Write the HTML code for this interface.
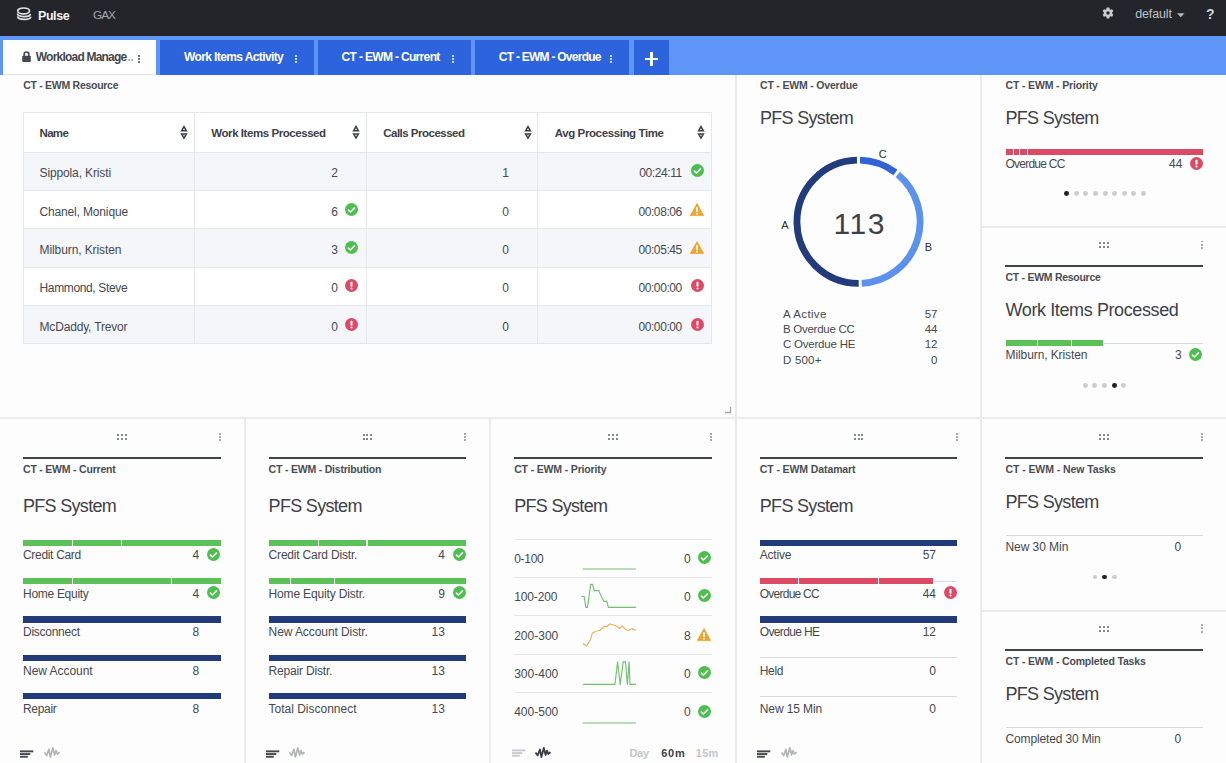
<!DOCTYPE html><html><head><meta charset="utf-8"><style>
html,body{margin:0;padding:0;width:1226px;height:763px;overflow:hidden;background:#e9ebee;font-family:"Liberation Sans",sans-serif;}
.t{position:absolute;white-space:pre;}.r{position:absolute;}.s{position:absolute;overflow:visible;}
</style></head><body>
<div class="r" style="left:0.00px;top:0.00px;width:1226.00px;height:36.00px;background:#23252b;"></div>
<svg class="s" style="left:16.00px;top:7.40px;" width="16" height="14" viewBox="0 0 16 14"><g fill="none" stroke="#e2e2e4" stroke-width="1.7"><ellipse cx="7.6" cy="3.9" rx="5.9" ry="2.9"/><path d="M1.5 6.6 C1.5 10.6 14.2 10.6 14.4 6.9"/><path d="M1.6 9.4 C1.8 13.4 14.6 13.3 14.8 9.8"/></g></svg>
<div class="t" style="left:38.00px;top:9.62px;font-size:12.5px;line-height:12.5px;font-weight:700;color:#f2f2f2;letter-spacing:-0.438px;">Pulse</div>
<div class="t" style="left:93.00px;top:10.21px;font-size:11.8px;line-height:11.8px;font-weight:400;color:#a3a6ab;letter-spacing:-0.960px;">GAX</div>
<svg class="s" style="left:1101.90px;top:7.40px;" width="12" height="12" viewBox="0 0 12 12"><path d="M4.33 2.25 L4.74 0.54 L7.26 0.54 L7.67 2.25 L8.41 2.68 L10.10 2.18 L11.36 4.36 L10.08 5.57 L10.08 6.43 L11.36 7.64 L10.10 9.82 L8.41 9.32 L7.67 9.75 L7.26 11.46 L4.74 11.46 L4.33 9.75 L3.59 9.32 L1.90 9.82 L0.64 7.64 L1.92 6.43 L1.92 5.57 L0.64 4.36 L1.90 2.18 L3.59 2.68Z" fill="#c9ccd1"/><circle cx="6" cy="6" r="1.7" fill="#23252b"/></svg>
<div class="t" style="left:1135.20px;top:8.02px;font-size:12.5px;line-height:12.5px;font-weight:400;color:#bfc2c7;letter-spacing:-0.122px;">default</div>
<svg class="s" style="left:1176.50px;top:12.80px;" width="8" height="5" viewBox="0 0 8 5"><path d="M0 0.3 L7.5 0.3 L3.75 4.2 Z" fill="#b5b8bd"/></svg>
<div class="t" style="left:1205.90px;top:6.65px;font-size:14px;line-height:14px;font-weight:700;color:#d2d4d7;letter-spacing:0.000px;">?</div>
<div class="r" style="left:0.00px;top:36.00px;width:1226.00px;height:38.60px;background:#5e95f7;"></div>
<div class="r" style="left:3.00px;top:40.00px;width:153.00px;height:34.80px;background:#ffffff;"></div>
<div class="r" style="left:3.00px;top:73.80px;width:153.00px;height:1.00px;background:#e4e5e8;"></div>
<div class="r" style="left:160.00px;top:40.00px;width:154.00px;height:34.60px;background:#2d64de;"></div>
<div class="r" style="left:318.00px;top:40.00px;width:153.00px;height:34.60px;background:#2d64de;"></div>
<div class="r" style="left:475.00px;top:40.00px;width:153.50px;height:34.60px;background:#2d64de;"></div>
<div class="r" style="left:634.00px;top:40.00px;width:35.00px;height:34.60px;background:#2d64de;"></div>
<svg class="s" style="left:22.00px;top:51.00px;" width="9" height="11" viewBox="0 0 9 11"><path d="M2.2 5 V3.3 A2.3 2.3 0 0 1 6.8 3.3 V5" stroke="#44474d" stroke-width="1.7" fill="none"/><rect x="0.2" y="4.8" width="8.6" height="6.1" rx="0.8" fill="#44474d"/></svg>
<div class="t" style="left:35.80px;top:51.44px;font-size:12px;line-height:12px;font-weight:700;color:#44474d;letter-spacing:-0.790px;">Workload Manage</div>
<div class="t" style="left:127.50px;top:51.44px;font-size:12px;line-height:12px;font-weight:700;color:#a9abaf;letter-spacing:-0.368px;">..</div>
<div class="r" style="left:137.90px;top:54.60px;width:2.00px;height:2.00px;background:#44474d;border-radius:1px"></div>
<div class="r" style="left:137.90px;top:57.80px;width:2.00px;height:2.00px;background:#44474d;border-radius:1px"></div>
<div class="r" style="left:137.90px;top:61.00px;width:2.00px;height:2.00px;background:#44474d;border-radius:1px"></div>
<div class="t" style="left:184.00px;top:51.44px;font-size:12px;line-height:12px;font-weight:700;color:#ffffff;letter-spacing:-0.606px;">Work Items Activity</div>
<div class="r" style="left:295.00px;top:54.60px;width:2.00px;height:2.00px;background:#ffffff;border-radius:1px"></div>
<div class="r" style="left:295.00px;top:57.80px;width:2.00px;height:2.00px;background:#ffffff;border-radius:1px"></div>
<div class="r" style="left:295.00px;top:61.00px;width:2.00px;height:2.00px;background:#ffffff;border-radius:1px"></div>
<div class="t" style="left:341.60px;top:51.44px;font-size:12px;line-height:12px;font-weight:700;color:#ffffff;letter-spacing:-0.664px;">CT - EWM - Current</div>
<div class="r" style="left:452.00px;top:54.60px;width:2.00px;height:2.00px;background:#ffffff;border-radius:1px"></div>
<div class="r" style="left:452.00px;top:57.80px;width:2.00px;height:2.00px;background:#ffffff;border-radius:1px"></div>
<div class="r" style="left:452.00px;top:61.00px;width:2.00px;height:2.00px;background:#ffffff;border-radius:1px"></div>
<div class="t" style="left:498.80px;top:51.44px;font-size:12px;line-height:12px;font-weight:700;color:#ffffff;letter-spacing:-0.743px;">CT - EWM - Overdue</div>
<div class="r" style="left:609.50px;top:54.60px;width:2.00px;height:2.00px;background:#ffffff;border-radius:1px"></div>
<div class="r" style="left:609.50px;top:57.80px;width:2.00px;height:2.00px;background:#ffffff;border-radius:1px"></div>
<div class="r" style="left:609.50px;top:61.00px;width:2.00px;height:2.00px;background:#ffffff;border-radius:1px"></div>
<div class="r" style="left:644.60px;top:57.90px;width:13.80px;height:2.30px;background:#ffffff;"></div>
<div class="r" style="left:650.40px;top:52.10px;width:2.30px;height:13.80px;background:#ffffff;"></div>
<div class="r" style="left:0.00px;top:75.00px;width:734.80px;height:342.30px;background:#fdfdfe;"></div>
<div class="r" style="left:736.80px;top:75.00px;width:243.60px;height:342.30px;background:#fdfdfe;"></div>
<div class="r" style="left:982.40px;top:75.00px;width:243.60px;height:150.60px;background:#fdfdfe;"></div>
<div class="r" style="left:982.40px;top:227.60px;width:243.60px;height:189.70px;background:#fdfdfe;"></div>
<div class="r" style="left:0.00px;top:419.30px;width:243.60px;height:343.70px;background:#fdfdfe;"></div>
<div class="r" style="left:245.60px;top:419.30px;width:243.60px;height:343.70px;background:#fdfdfe;"></div>
<div class="r" style="left:491.20px;top:419.30px;width:243.60px;height:343.70px;background:#fdfdfe;"></div>
<div class="r" style="left:736.80px;top:419.30px;width:243.60px;height:343.70px;background:#fdfdfe;"></div>
<div class="r" style="left:982.40px;top:419.30px;width:243.60px;height:190.30px;background:#fdfdfe;"></div>
<div class="r" style="left:982.40px;top:611.60px;width:243.60px;height:151.40px;background:#fdfdfe;"></div>
<div class="t" style="left:23.20px;top:80.31px;font-size:10.5px;line-height:10.5px;font-weight:700;color:#4a4d53;letter-spacing:-0.279px;">CT - EWM Resource</div>
<div class="r" style="left:23.00px;top:112.20px;width:688.50px;height:231.80px;background:#ffffff;box-sizing:border-box;border:1px solid #e4e7eb"></div>
<div class="r" style="left:24.00px;top:152.00px;width:686.50px;height:38.40px;background:#f4f6f9;"></div>
<div class="r" style="left:23.00px;top:151.50px;width:688.50px;height:1.00px;background:#e4e7eb;"></div>
<div class="r" style="left:24.00px;top:190.40px;width:686.50px;height:38.40px;background:#ffffff;"></div>
<div class="r" style="left:23.00px;top:189.90px;width:688.50px;height:1.00px;background:#e4e7eb;"></div>
<div class="r" style="left:24.00px;top:228.80px;width:686.50px;height:38.40px;background:#f4f6f9;"></div>
<div class="r" style="left:23.00px;top:228.30px;width:688.50px;height:1.00px;background:#e4e7eb;"></div>
<div class="r" style="left:24.00px;top:267.20px;width:686.50px;height:38.40px;background:#ffffff;"></div>
<div class="r" style="left:23.00px;top:266.70px;width:688.50px;height:1.00px;background:#e4e7eb;"></div>
<div class="r" style="left:24.00px;top:305.60px;width:686.50px;height:38.40px;background:#f4f6f9;"></div>
<div class="r" style="left:23.00px;top:305.10px;width:688.50px;height:1.00px;background:#e4e7eb;"></div>
<div class="r" style="left:193.90px;top:112.20px;width:1.00px;height:231.80px;background:#e4e7eb;"></div>
<div class="r" style="left:365.70px;top:112.20px;width:1.00px;height:231.80px;background:#e4e7eb;"></div>
<div class="r" style="left:537.10px;top:112.20px;width:1.00px;height:231.80px;background:#e4e7eb;"></div>
<div class="r" style="left:23.00px;top:343.00px;width:688.50px;height:1.00px;background:#e4e7eb;"></div>
<div class="r" style="left:710.50px;top:112.20px;width:1.00px;height:231.80px;background:#e4e7eb;"></div>
<div class="t" style="left:39.50px;top:128.07px;font-size:11.5px;line-height:11.5px;font-weight:700;color:#3e4147;letter-spacing:-0.674px;">Name</div>
<div class="t" style="left:211.30px;top:128.07px;font-size:11.5px;line-height:11.5px;font-weight:700;color:#3e4147;letter-spacing:-0.439px;">Work Items Processed</div>
<div class="t" style="left:383.20px;top:128.07px;font-size:11.5px;line-height:11.5px;font-weight:700;color:#3e4147;letter-spacing:-0.504px;">Calls Processed</div>
<div class="t" style="left:554.70px;top:128.07px;font-size:11.5px;line-height:11.5px;font-weight:700;color:#3e4147;letter-spacing:-0.390px;">Avg Processing Time</div>
<svg class="s" style="left:180.00px;top:124.80px;" width="8" height="15" viewBox="0 0 8 15"><path d="M4 0.1 L7.7 6.6 L0.3 6.6 Z M4 3.3 L5.0 5.1 L3.0 5.1 Z" fill="#3e4147" fill-rule="evenodd"/><path d="M4 14.5 L7.7 8.2 L0.3 8.2 Z M4 11.4 L5.0 9.7 L3.0 9.7 Z" fill="#3e4147" fill-rule="evenodd"/></svg>
<svg class="s" style="left:352.30px;top:124.80px;" width="8" height="15" viewBox="0 0 8 15"><path d="M4 0.1 L7.7 6.6 L0.3 6.6 Z M4 3.3 L5.0 5.1 L3.0 5.1 Z" fill="#3e4147" fill-rule="evenodd"/><path d="M4 14.5 L7.7 8.2 L0.3 8.2 Z M4 11.4 L5.0 9.7 L3.0 9.7 Z" fill="#3e4147" fill-rule="evenodd"/></svg>
<svg class="s" style="left:523.60px;top:124.80px;" width="8" height="15" viewBox="0 0 8 15"><path d="M4 0.1 L7.7 6.6 L0.3 6.6 Z M4 3.3 L5.0 5.1 L3.0 5.1 Z" fill="#3e4147" fill-rule="evenodd"/><path d="M4 14.5 L7.7 8.2 L0.3 8.2 Z M4 11.4 L5.0 9.7 L3.0 9.7 Z" fill="#3e4147" fill-rule="evenodd"/></svg>
<svg class="s" style="left:697.30px;top:124.80px;" width="8" height="15" viewBox="0 0 8 15"><path d="M4 0.1 L7.7 6.6 L0.3 6.6 Z M4 3.3 L5.0 5.1 L3.0 5.1 Z" fill="#3e4147" fill-rule="evenodd"/><path d="M4 14.5 L7.7 8.2 L0.3 8.2 Z M4 11.4 L5.0 9.7 L3.0 9.7 Z" fill="#3e4147" fill-rule="evenodd"/></svg>
<div class="t" style="left:39.50px;top:167.14px;font-size:12px;line-height:12px;font-weight:400;color:#46494f;letter-spacing:-0.126px;">Sippola, Kristi</div>
<div class="t" style="left:-262.00px;width:600px;text-align:right;top:167.14px;font-size:12px;line-height:12px;font-weight:400;color:#46494f;letter-spacing:0.000px;">2</div>
<div class="t" style="left:-91.20px;width:600px;text-align:right;top:167.14px;font-size:12px;line-height:12px;font-weight:400;color:#46494f;letter-spacing:0.000px;">1</div>
<div class="t" style="left:81.91px;width:600px;text-align:right;top:167.14px;font-size:12px;line-height:12px;font-weight:400;color:#46494f;letter-spacing:-0.393px;">00:24:11</div>
<svg class="s" style="left:690.50px;top:164.20px;" width="13" height="13" viewBox="0 0 13 13"><circle cx="6.5" cy="6.5" r="6.5" fill="#4cbf4e"/><path d="M3.40 7.10 L5.40 9.00 L9.50 4.90" stroke="#fff" stroke-width="1.5" fill="none" stroke-linecap="round" stroke-linejoin="round"/></svg>
<div class="t" style="left:39.50px;top:205.54px;font-size:12px;line-height:12px;font-weight:400;color:#46494f;letter-spacing:-0.152px;">Chanel, Monique</div>
<div class="t" style="left:-262.00px;width:600px;text-align:right;top:205.54px;font-size:12px;line-height:12px;font-weight:400;color:#46494f;letter-spacing:0.000px;">6</div>
<svg class="s" style="left:345.10px;top:202.60px;" width="13" height="13" viewBox="0 0 13 13"><circle cx="6.5" cy="6.5" r="6.5" fill="#4cbf4e"/><path d="M3.40 7.10 L5.40 9.00 L9.50 4.90" stroke="#fff" stroke-width="1.5" fill="none" stroke-linecap="round" stroke-linejoin="round"/></svg>
<div class="t" style="left:-91.20px;width:600px;text-align:right;top:205.54px;font-size:12px;line-height:12px;font-weight:400;color:#46494f;letter-spacing:0.000px;">0</div>
<div class="t" style="left:81.90px;width:600px;text-align:right;top:205.54px;font-size:12px;line-height:12px;font-weight:400;color:#46494f;letter-spacing:-0.400px;">00:08:06</div>
<svg class="s" style="left:690.00px;top:203.00px;" width="14" height="13" viewBox="0 0 14 13"><path d="M7.0 0.6 L13.7 12.6 L0.3 12.6 Z" fill="#f0a52e" stroke="#f0a52e" stroke-width="0.8" stroke-linejoin="round"/><rect x="6.10" y="4.3" width="1.8" height="4.6" fill="#fff"/><rect x="6.10" y="9.8" width="1.8" height="1.7" fill="#fff"/></svg>
<div class="t" style="left:39.50px;top:243.94px;font-size:12px;line-height:12px;font-weight:400;color:#46494f;letter-spacing:-0.091px;">Milburn, Kristen</div>
<div class="t" style="left:-262.00px;width:600px;text-align:right;top:243.94px;font-size:12px;line-height:12px;font-weight:400;color:#46494f;letter-spacing:0.000px;">3</div>
<svg class="s" style="left:345.10px;top:241.00px;" width="13" height="13" viewBox="0 0 13 13"><circle cx="6.5" cy="6.5" r="6.5" fill="#4cbf4e"/><path d="M3.40 7.10 L5.40 9.00 L9.50 4.90" stroke="#fff" stroke-width="1.5" fill="none" stroke-linecap="round" stroke-linejoin="round"/></svg>
<div class="t" style="left:-91.20px;width:600px;text-align:right;top:243.94px;font-size:12px;line-height:12px;font-weight:400;color:#46494f;letter-spacing:0.000px;">0</div>
<div class="t" style="left:81.90px;width:600px;text-align:right;top:243.94px;font-size:12px;line-height:12px;font-weight:400;color:#46494f;letter-spacing:-0.400px;">00:05:45</div>
<svg class="s" style="left:690.00px;top:241.40px;" width="14" height="13" viewBox="0 0 14 13"><path d="M7.0 0.6 L13.7 12.6 L0.3 12.6 Z" fill="#f0a52e" stroke="#f0a52e" stroke-width="0.8" stroke-linejoin="round"/><rect x="6.10" y="4.3" width="1.8" height="4.6" fill="#fff"/><rect x="6.10" y="9.8" width="1.8" height="1.7" fill="#fff"/></svg>
<div class="t" style="left:39.50px;top:282.34px;font-size:12px;line-height:12px;font-weight:400;color:#46494f;letter-spacing:-0.355px;">Hammond, Steve</div>
<div class="t" style="left:-262.00px;width:600px;text-align:right;top:282.34px;font-size:12px;line-height:12px;font-weight:400;color:#46494f;letter-spacing:0.000px;">0</div>
<svg class="s" style="left:345.10px;top:279.40px;" width="13" height="13" viewBox="0 0 13 13"><circle cx="6.5" cy="6.5" r="6.5" fill="#dc4a66"/><rect x="5.50" y="2.70" width="2" height="5" rx="0.8" fill="#fff"/><circle cx="6.5" cy="9.50" r="1.05" fill="#fff"/></svg>
<div class="t" style="left:-91.20px;width:600px;text-align:right;top:282.34px;font-size:12px;line-height:12px;font-weight:400;color:#46494f;letter-spacing:0.000px;">0</div>
<div class="t" style="left:81.90px;width:600px;text-align:right;top:282.34px;font-size:12px;line-height:12px;font-weight:400;color:#46494f;letter-spacing:-0.400px;">00:00:00</div>
<svg class="s" style="left:690.50px;top:279.40px;" width="13" height="13" viewBox="0 0 13 13"><circle cx="6.5" cy="6.5" r="6.5" fill="#dc4a66"/><rect x="5.50" y="2.70" width="2" height="5" rx="0.8" fill="#fff"/><circle cx="6.5" cy="9.50" r="1.05" fill="#fff"/></svg>
<div class="t" style="left:39.50px;top:320.74px;font-size:12px;line-height:12px;font-weight:400;color:#46494f;letter-spacing:-0.169px;">McDaddy, Trevor</div>
<div class="t" style="left:-262.00px;width:600px;text-align:right;top:320.74px;font-size:12px;line-height:12px;font-weight:400;color:#46494f;letter-spacing:0.000px;">0</div>
<svg class="s" style="left:345.10px;top:317.80px;" width="13" height="13" viewBox="0 0 13 13"><circle cx="6.5" cy="6.5" r="6.5" fill="#dc4a66"/><rect x="5.50" y="2.70" width="2" height="5" rx="0.8" fill="#fff"/><circle cx="6.5" cy="9.50" r="1.05" fill="#fff"/></svg>
<div class="t" style="left:-91.20px;width:600px;text-align:right;top:320.74px;font-size:12px;line-height:12px;font-weight:400;color:#46494f;letter-spacing:0.000px;">0</div>
<div class="t" style="left:81.90px;width:600px;text-align:right;top:320.74px;font-size:12px;line-height:12px;font-weight:400;color:#46494f;letter-spacing:-0.400px;">00:00:00</div>
<svg class="s" style="left:690.50px;top:317.80px;" width="13" height="13" viewBox="0 0 13 13"><circle cx="6.5" cy="6.5" r="6.5" fill="#dc4a66"/><rect x="5.50" y="2.70" width="2" height="5" rx="0.8" fill="#fff"/><circle cx="6.5" cy="9.50" r="1.05" fill="#fff"/></svg>
<svg class="s" style="left:724.00px;top:406.00px;" width="8" height="8" viewBox="0 0 8 8"><path d="M1 6.5 H6.5 V1" stroke="#a3a6aa" stroke-width="1.3" fill="none"/></svg>
<div class="t" style="left:760.00px;top:80.31px;font-size:10.5px;line-height:10.5px;font-weight:700;color:#4a4d53;letter-spacing:-0.184px;">CT - EWM - Overdue</div>
<div class="t" style="left:760.00px;top:109.36px;font-size:18px;line-height:18px;font-weight:400;color:#3e4147;letter-spacing:-0.691px;">PFS System</div>
<svg class="s" style="left:700.00px;top:130.00px;" width="200" height="200" viewBox="0 0 200 200"><path d="M160.01 30.22 A61.6 61.6 0 0 1 195.43 42.49" stroke="#2f63d6" stroke-width="6.8" fill="none"/><path d="M197.79 44.36 A61.6 61.6 0 0 1 161.72 153.32" stroke="#5b92ee" stroke-width="6.8" fill="none"/><path d="M158.71 153.40 A61.6 61.6 0 0 1 156.99 30.22" stroke="#213b7c" stroke-width="6.8" fill="none"/></svg>
<div class="t" style="left:878.80px;top:149.09px;font-size:11px;line-height:11px;font-weight:400;color:#2b2d31;letter-spacing:0.000px;">C</div>
<div class="t" style="left:781.30px;top:220.29px;font-size:11px;line-height:11px;font-weight:400;color:#2b2d31;letter-spacing:0.000px;">A</div>
<div class="t" style="left:924.70px;top:241.89px;font-size:11px;line-height:11px;font-weight:400;color:#2b2d31;letter-spacing:0.000px;">B</div>
<div class="t" style="left:833.40px;top:209.00px;font-size:30px;line-height:30px;font-weight:400;color:#3e4148;letter-spacing:1.636px;">113</div>
<div class="t" style="left:783.00px;top:308.67px;font-size:11.5px;line-height:11.5px;font-weight:400;color:#46494f;letter-spacing:0.341px;">A Active</div>
<div class="t" style="left:337.50px;width:600px;text-align:right;top:308.67px;font-size:11.5px;line-height:11.5px;font-weight:400;color:#46494f;letter-spacing:0.000px;">57</div>
<div class="t" style="left:783.00px;top:324.02px;font-size:11.5px;line-height:11.5px;font-weight:400;color:#46494f;letter-spacing:-0.271px;">B Overdue CC</div>
<div class="t" style="left:337.50px;width:600px;text-align:right;top:324.02px;font-size:11.5px;line-height:11.5px;font-weight:400;color:#46494f;letter-spacing:0.000px;">44</div>
<div class="t" style="left:783.00px;top:339.37px;font-size:11.5px;line-height:11.5px;font-weight:400;color:#46494f;letter-spacing:-0.216px;">C Overdue HE</div>
<div class="t" style="left:337.50px;width:600px;text-align:right;top:339.37px;font-size:11.5px;line-height:11.5px;font-weight:400;color:#46494f;letter-spacing:0.000px;">12</div>
<div class="t" style="left:783.00px;top:354.72px;font-size:11.5px;line-height:11.5px;font-weight:400;color:#46494f;letter-spacing:0.199px;">D 500+</div>
<div class="t" style="left:337.50px;width:600px;text-align:right;top:354.72px;font-size:11.5px;line-height:11.5px;font-weight:400;color:#46494f;letter-spacing:0.000px;">0</div>
<div class="t" style="left:1005.50px;top:80.31px;font-size:10.5px;line-height:10.5px;font-weight:700;color:#4a4d53;letter-spacing:-0.154px;">CT - EWM - Priority</div>
<div class="t" style="left:1005.50px;top:109.36px;font-size:18px;line-height:18px;font-weight:400;color:#3e4147;letter-spacing:-0.691px;">PFS System</div>
<div class="r" style="left:1005.50px;top:148.60px;width:197.50px;height:6.00px;background:#dc4a66;"></div>
<div class="r" style="left:1013.10px;top:148.60px;width:1.20px;height:6.00px;background:#ffffff;"></div>
<div class="r" style="left:1018.50px;top:148.60px;width:1.20px;height:6.00px;background:#ffffff;"></div>
<div class="r" style="left:1026.50px;top:148.60px;width:1.20px;height:6.00px;background:#ffffff;"></div>
<div class="t" style="left:1005.50px;top:157.84px;font-size:12px;line-height:12px;font-weight:400;color:#46494f;letter-spacing:-0.766px;">Overdue CC</div>
<div class="t" style="left:582.40px;width:600px;text-align:right;top:157.84px;font-size:12px;line-height:12px;font-weight:400;color:#46494f;letter-spacing:0.000px;">44</div>
<svg class="s" style="left:1189.70px;top:156.50px;" width="13" height="13" viewBox="0 0 13 13"><circle cx="6.5" cy="6.5" r="6.5" fill="#dc4a66"/><rect x="5.50" y="2.70" width="2" height="5" rx="0.8" fill="#fff"/><circle cx="6.5" cy="9.50" r="1.05" fill="#fff"/></svg>
<div class="r" style="left:1064.25px;top:190.85px;width:4.90px;height:4.90px;background:#1f2124;border-radius:50%"></div>
<div class="r" style="left:1073.85px;top:190.85px;width:4.90px;height:4.90px;background:#cbcdd1;border-radius:50%"></div>
<div class="r" style="left:1083.45px;top:190.85px;width:4.90px;height:4.90px;background:#cbcdd1;border-radius:50%"></div>
<div class="r" style="left:1093.05px;top:190.85px;width:4.90px;height:4.90px;background:#cbcdd1;border-radius:50%"></div>
<div class="r" style="left:1102.65px;top:190.85px;width:4.90px;height:4.90px;background:#cbcdd1;border-radius:50%"></div>
<div class="r" style="left:1112.25px;top:190.85px;width:4.90px;height:4.90px;background:#cbcdd1;border-radius:50%"></div>
<div class="r" style="left:1121.85px;top:190.85px;width:4.90px;height:4.90px;background:#cbcdd1;border-radius:50%"></div>
<div class="r" style="left:1131.45px;top:190.85px;width:4.90px;height:4.90px;background:#cbcdd1;border-radius:50%"></div>
<div class="r" style="left:1141.05px;top:190.85px;width:4.90px;height:4.90px;background:#cbcdd1;border-radius:50%"></div>
<div class="r" style="left:1099.35px;top:242.15px;width:2.00px;height:2.00px;background:#85888c;"></div>
<div class="r" style="left:1099.35px;top:246.05px;width:2.00px;height:2.00px;background:#85888c;"></div>
<div class="r" style="left:1103.20px;top:242.15px;width:2.00px;height:2.00px;background:#85888c;"></div>
<div class="r" style="left:1103.20px;top:246.05px;width:2.00px;height:2.00px;background:#85888c;"></div>
<div class="r" style="left:1107.05px;top:242.15px;width:2.00px;height:2.00px;background:#85888c;"></div>
<div class="r" style="left:1107.05px;top:246.05px;width:2.00px;height:2.00px;background:#85888c;"></div>
<div class="r" style="left:1201.25px;top:240.55px;width:1.90px;height:1.90px;background:#8a8d92;border-radius:1px"></div>
<div class="r" style="left:1201.25px;top:243.85px;width:1.90px;height:1.90px;background:#8a8d92;border-radius:1px"></div>
<div class="r" style="left:1201.25px;top:247.15px;width:1.90px;height:1.90px;background:#8a8d92;border-radius:1px"></div>
<div class="r" style="left:1005.40px;top:265.00px;width:197.60px;height:2.00px;background:#404349;"></div>
<div class="t" style="left:1005.50px;top:271.71px;font-size:10.5px;line-height:10.5px;font-weight:700;color:#4a4d53;letter-spacing:-0.279px;">CT - EWM Resource</div>
<div class="t" style="left:1005.50px;top:301.16px;font-size:18px;line-height:18px;font-weight:400;color:#3e4147;letter-spacing:-0.391px;">Work Items Processed</div>
<div class="r" style="left:1005.50px;top:342.70px;width:197.50px;height:1.00px;background:#d7d9dd;"></div>
<div class="r" style="left:1005.50px;top:340.00px;width:97.80px;height:6.00px;background:#5cc257;"></div>
<div class="r" style="left:1036.70px;top:340.00px;width:1.20px;height:6.00px;background:#ffffff;"></div>
<div class="r" style="left:1070.70px;top:340.00px;width:1.20px;height:6.00px;background:#ffffff;"></div>
<div class="t" style="left:1005.50px;top:349.24px;font-size:12px;line-height:12px;font-weight:400;color:#46494f;letter-spacing:-0.091px;">Milburn, Kristen</div>
<div class="t" style="left:581.70px;width:600px;text-align:right;top:349.24px;font-size:12px;line-height:12px;font-weight:400;color:#46494f;letter-spacing:0.000px;">3</div>
<svg class="s" style="left:1189.30px;top:348.30px;" width="13" height="13" viewBox="0 0 13 13"><circle cx="6.5" cy="6.5" r="6.5" fill="#4cbf4e"/><path d="M3.40 7.10 L5.40 9.00 L9.50 4.90" stroke="#fff" stroke-width="1.5" fill="none" stroke-linecap="round" stroke-linejoin="round"/></svg>
<div class="r" style="left:1082.85px;top:382.95px;width:4.90px;height:4.90px;background:#cbcdd1;border-radius:50%"></div>
<div class="r" style="left:1092.45px;top:382.95px;width:4.90px;height:4.90px;background:#cbcdd1;border-radius:50%"></div>
<div class="r" style="left:1102.05px;top:382.95px;width:4.90px;height:4.90px;background:#cbcdd1;border-radius:50%"></div>
<div class="r" style="left:1111.65px;top:382.95px;width:4.90px;height:4.90px;background:#1f2124;border-radius:50%"></div>
<div class="r" style="left:1121.25px;top:382.95px;width:4.90px;height:4.90px;background:#cbcdd1;border-radius:50%"></div>
<div class="r" style="left:116.95px;top:434.25px;width:2.00px;height:2.00px;background:#85888c;"></div>
<div class="r" style="left:116.95px;top:438.15px;width:2.00px;height:2.00px;background:#85888c;"></div>
<div class="r" style="left:120.80px;top:434.25px;width:2.00px;height:2.00px;background:#85888c;"></div>
<div class="r" style="left:120.80px;top:438.15px;width:2.00px;height:2.00px;background:#85888c;"></div>
<div class="r" style="left:124.65px;top:434.25px;width:2.00px;height:2.00px;background:#85888c;"></div>
<div class="r" style="left:124.65px;top:438.15px;width:2.00px;height:2.00px;background:#85888c;"></div>
<div class="r" style="left:218.85px;top:432.65px;width:1.90px;height:1.90px;background:#8a8d92;border-radius:1px"></div>
<div class="r" style="left:218.85px;top:435.95px;width:1.90px;height:1.90px;background:#8a8d92;border-radius:1px"></div>
<div class="r" style="left:218.85px;top:439.25px;width:1.90px;height:1.90px;background:#8a8d92;border-radius:1px"></div>
<div class="r" style="left:23.00px;top:457.10px;width:197.60px;height:2.00px;background:#404349;"></div>
<div class="t" style="left:23.00px;top:463.71px;font-size:10.5px;line-height:10.5px;font-weight:700;color:#4a4d53;letter-spacing:-0.202px;">CT - EWM - Current</div>
<div class="t" style="left:23.00px;top:496.96px;font-size:18px;line-height:18px;font-weight:400;color:#3e4147;letter-spacing:-0.691px;">PFS System</div>
<div class="r" style="left:23.00px;top:539.60px;width:197.60px;height:6.30px;background:#5cc257;"></div>
<div class="r" style="left:71.70px;top:539.60px;width:1.20px;height:6.30px;background:#ffffff;"></div>
<div class="r" style="left:120.70px;top:539.60px;width:1.20px;height:6.30px;background:#ffffff;"></div>
<div class="t" style="left:23.00px;top:549.44px;font-size:12px;line-height:12px;font-weight:400;color:#46494f;letter-spacing:-0.316px;">Credit Card</div>
<div class="t" style="left:-400.80px;width:600px;text-align:right;top:549.44px;font-size:12px;line-height:12px;font-weight:400;color:#46494f;letter-spacing:0.000px;">4</div>
<svg class="s" style="left:207.10px;top:547.90px;" width="13" height="13" viewBox="0 0 13 13"><circle cx="6.5" cy="6.5" r="6.5" fill="#4cbf4e"/><path d="M3.40 7.10 L5.40 9.00 L9.50 4.90" stroke="#fff" stroke-width="1.5" fill="none" stroke-linecap="round" stroke-linejoin="round"/></svg>
<div class="r" style="left:23.00px;top:578.00px;width:197.60px;height:6.30px;background:#5cc257;"></div>
<div class="r" style="left:71.80px;top:578.00px;width:1.20px;height:6.30px;background:#ffffff;"></div>
<div class="r" style="left:170.80px;top:578.00px;width:1.20px;height:6.30px;background:#ffffff;"></div>
<div class="t" style="left:23.00px;top:587.84px;font-size:12px;line-height:12px;font-weight:400;color:#46494f;letter-spacing:-0.290px;">Home Equity</div>
<div class="t" style="left:-400.80px;width:600px;text-align:right;top:587.84px;font-size:12px;line-height:12px;font-weight:400;color:#46494f;letter-spacing:0.000px;">4</div>
<svg class="s" style="left:207.10px;top:586.30px;" width="13" height="13" viewBox="0 0 13 13"><circle cx="6.5" cy="6.5" r="6.5" fill="#4cbf4e"/><path d="M3.40 7.10 L5.40 9.00 L9.50 4.90" stroke="#fff" stroke-width="1.5" fill="none" stroke-linecap="round" stroke-linejoin="round"/></svg>
<div class="r" style="left:23.00px;top:616.40px;width:197.60px;height:6.30px;background:#213a78;"></div>
<div class="t" style="left:23.00px;top:626.24px;font-size:12px;line-height:12px;font-weight:400;color:#46494f;letter-spacing:-0.263px;">Disconnect</div>
<div class="t" style="left:-400.80px;width:600px;text-align:right;top:626.24px;font-size:12px;line-height:12px;font-weight:400;color:#46494f;letter-spacing:0.000px;">8</div>
<div class="r" style="left:23.00px;top:654.80px;width:197.60px;height:6.30px;background:#213a78;"></div>
<div class="t" style="left:23.00px;top:664.64px;font-size:12px;line-height:12px;font-weight:400;color:#46494f;letter-spacing:-0.034px;">New Account</div>
<div class="t" style="left:-400.80px;width:600px;text-align:right;top:664.64px;font-size:12px;line-height:12px;font-weight:400;color:#46494f;letter-spacing:0.000px;">8</div>
<div class="r" style="left:23.00px;top:693.20px;width:197.60px;height:6.30px;background:#213a78;"></div>
<div class="t" style="left:23.00px;top:703.04px;font-size:12px;line-height:12px;font-weight:400;color:#46494f;letter-spacing:-0.310px;">Repair</div>
<div class="t" style="left:-400.80px;width:600px;text-align:right;top:703.04px;font-size:12px;line-height:12px;font-weight:400;color:#46494f;letter-spacing:0.000px;">8</div>
<svg class="s" style="left:20.00px;top:749.50px;" width="14" height="9" viewBox="0 0 14 9"><rect x="0" y="0.4" width="13.3" height="1.9" fill="#45484e"/><rect x="0" y="3.1" width="10.3" height="1.9" fill="#45484e"/><rect x="0" y="5.8" width="7.8" height="1.9" fill="#45484e"/></svg>
<svg class="s" style="left:43.80px;top:747.40px;" width="16" height="11" viewBox="0 0 16 11"><path d="M0.5 5.5 L2.7 8.5 L4.9 2.4 L6.4 10.0 L8.8 0.9 L10.6 8.0 L12.0 3.6 L13.3 7.0 L14.7 5.5 L15.4 6.5" stroke="#b3b5b9" stroke-width="1.7" fill="none" stroke-linejoin="round"/></svg>
<div class="r" style="left:362.55px;top:434.25px;width:2.00px;height:2.00px;background:#85888c;"></div>
<div class="r" style="left:362.55px;top:438.15px;width:2.00px;height:2.00px;background:#85888c;"></div>
<div class="r" style="left:366.40px;top:434.25px;width:2.00px;height:2.00px;background:#85888c;"></div>
<div class="r" style="left:366.40px;top:438.15px;width:2.00px;height:2.00px;background:#85888c;"></div>
<div class="r" style="left:370.25px;top:434.25px;width:2.00px;height:2.00px;background:#85888c;"></div>
<div class="r" style="left:370.25px;top:438.15px;width:2.00px;height:2.00px;background:#85888c;"></div>
<div class="r" style="left:464.45px;top:432.65px;width:1.90px;height:1.90px;background:#8a8d92;border-radius:1px"></div>
<div class="r" style="left:464.45px;top:435.95px;width:1.90px;height:1.90px;background:#8a8d92;border-radius:1px"></div>
<div class="r" style="left:464.45px;top:439.25px;width:1.90px;height:1.90px;background:#8a8d92;border-radius:1px"></div>
<div class="r" style="left:268.60px;top:457.10px;width:197.60px;height:2.00px;background:#404349;"></div>
<div class="t" style="left:268.60px;top:463.71px;font-size:10.5px;line-height:10.5px;font-weight:700;color:#4a4d53;letter-spacing:-0.201px;">CT - EWM - Distribution</div>
<div class="t" style="left:268.60px;top:496.96px;font-size:18px;line-height:18px;font-weight:400;color:#3e4147;letter-spacing:-0.691px;">PFS System</div>
<div class="r" style="left:268.60px;top:539.60px;width:197.60px;height:6.30px;background:#5cc257;"></div>
<div class="r" style="left:317.60px;top:539.60px;width:1.20px;height:6.30px;background:#ffffff;"></div>
<div class="r" style="left:366.40px;top:539.60px;width:1.20px;height:6.30px;background:#ffffff;"></div>
<div class="t" style="left:268.60px;top:549.44px;font-size:12px;line-height:12px;font-weight:400;color:#46494f;letter-spacing:-0.190px;">Credit Card Distr.</div>
<div class="t" style="left:-155.20px;width:600px;text-align:right;top:549.44px;font-size:12px;line-height:12px;font-weight:400;color:#46494f;letter-spacing:0.000px;">4</div>
<svg class="s" style="left:452.70px;top:547.90px;" width="13" height="13" viewBox="0 0 13 13"><circle cx="6.5" cy="6.5" r="6.5" fill="#4cbf4e"/><path d="M3.40 7.10 L5.40 9.00 L9.50 4.90" stroke="#fff" stroke-width="1.5" fill="none" stroke-linecap="round" stroke-linejoin="round"/></svg>
<div class="r" style="left:268.60px;top:578.00px;width:197.60px;height:6.30px;background:#5cc257;"></div>
<div class="r" style="left:289.50px;top:578.00px;width:1.20px;height:6.30px;background:#ffffff;"></div>
<div class="r" style="left:333.50px;top:578.00px;width:1.20px;height:6.30px;background:#ffffff;"></div>
<div class="t" style="left:268.60px;top:587.84px;font-size:12px;line-height:12px;font-weight:400;color:#46494f;letter-spacing:-0.163px;">Home Equity Distr.</div>
<div class="t" style="left:-155.20px;width:600px;text-align:right;top:587.84px;font-size:12px;line-height:12px;font-weight:400;color:#46494f;letter-spacing:0.000px;">9</div>
<svg class="s" style="left:452.70px;top:586.30px;" width="13" height="13" viewBox="0 0 13 13"><circle cx="6.5" cy="6.5" r="6.5" fill="#4cbf4e"/><path d="M3.40 7.10 L5.40 9.00 L9.50 4.90" stroke="#fff" stroke-width="1.5" fill="none" stroke-linecap="round" stroke-linejoin="round"/></svg>
<div class="r" style="left:268.60px;top:616.40px;width:197.60px;height:6.30px;background:#213a78;"></div>
<div class="t" style="left:268.60px;top:626.24px;font-size:12px;line-height:12px;font-weight:400;color:#46494f;letter-spacing:-0.083px;">New Account Distr.</div>
<div class="t" style="left:-155.20px;width:600px;text-align:right;top:626.24px;font-size:12px;line-height:12px;font-weight:400;color:#46494f;letter-spacing:0.000px;">13</div>
<div class="r" style="left:268.60px;top:654.80px;width:197.60px;height:6.30px;background:#213a78;"></div>
<div class="t" style="left:268.60px;top:664.64px;font-size:12px;line-height:12px;font-weight:400;color:#46494f;letter-spacing:-0.185px;">Repair Distr.</div>
<div class="t" style="left:-155.20px;width:600px;text-align:right;top:664.64px;font-size:12px;line-height:12px;font-weight:400;color:#46494f;letter-spacing:0.000px;">13</div>
<div class="r" style="left:268.60px;top:693.20px;width:197.60px;height:6.30px;background:#213a78;"></div>
<div class="t" style="left:268.60px;top:703.04px;font-size:12px;line-height:12px;font-weight:400;color:#46494f;letter-spacing:-0.010px;">Total Disconnect</div>
<div class="t" style="left:-155.20px;width:600px;text-align:right;top:703.04px;font-size:12px;line-height:12px;font-weight:400;color:#46494f;letter-spacing:0.000px;">13</div>
<svg class="s" style="left:265.60px;top:749.50px;" width="14" height="9" viewBox="0 0 14 9"><rect x="0" y="0.4" width="13.3" height="1.9" fill="#45484e"/><rect x="0" y="3.1" width="10.3" height="1.9" fill="#45484e"/><rect x="0" y="5.8" width="7.8" height="1.9" fill="#45484e"/></svg>
<svg class="s" style="left:289.40px;top:747.40px;" width="16" height="11" viewBox="0 0 16 11"><path d="M0.5 5.5 L2.7 8.5 L4.9 2.4 L6.4 10.0 L8.8 0.9 L10.6 8.0 L12.0 3.6 L13.3 7.0 L14.7 5.5 L15.4 6.5" stroke="#b3b5b9" stroke-width="1.7" fill="none" stroke-linejoin="round"/></svg>
<div class="r" style="left:853.75px;top:434.25px;width:2.00px;height:2.00px;background:#85888c;"></div>
<div class="r" style="left:853.75px;top:438.15px;width:2.00px;height:2.00px;background:#85888c;"></div>
<div class="r" style="left:857.60px;top:434.25px;width:2.00px;height:2.00px;background:#85888c;"></div>
<div class="r" style="left:857.60px;top:438.15px;width:2.00px;height:2.00px;background:#85888c;"></div>
<div class="r" style="left:861.45px;top:434.25px;width:2.00px;height:2.00px;background:#85888c;"></div>
<div class="r" style="left:861.45px;top:438.15px;width:2.00px;height:2.00px;background:#85888c;"></div>
<div class="r" style="left:955.65px;top:432.65px;width:1.90px;height:1.90px;background:#8a8d92;border-radius:1px"></div>
<div class="r" style="left:955.65px;top:435.95px;width:1.90px;height:1.90px;background:#8a8d92;border-radius:1px"></div>
<div class="r" style="left:955.65px;top:439.25px;width:1.90px;height:1.90px;background:#8a8d92;border-radius:1px"></div>
<div class="r" style="left:759.80px;top:457.10px;width:197.60px;height:2.00px;background:#404349;"></div>
<div class="t" style="left:759.80px;top:463.71px;font-size:10.5px;line-height:10.5px;font-weight:700;color:#4a4d53;letter-spacing:-0.102px;">CT - EWM Datamart</div>
<div class="t" style="left:759.80px;top:496.96px;font-size:18px;line-height:18px;font-weight:400;color:#3e4147;letter-spacing:-0.691px;">PFS System</div>
<div class="r" style="left:759.80px;top:539.60px;width:197.60px;height:6.30px;background:#213a78;"></div>
<div class="t" style="left:759.80px;top:549.44px;font-size:12px;line-height:12px;font-weight:400;color:#46494f;letter-spacing:-0.216px;">Active</div>
<div class="t" style="left:336.00px;width:600px;text-align:right;top:549.44px;font-size:12px;line-height:12px;font-weight:400;color:#46494f;letter-spacing:0.000px;">57</div>
<div class="r" style="left:759.80px;top:580.50px;width:197.60px;height:1.00px;background:#d7d9dd;"></div>
<div class="r" style="left:759.80px;top:578.00px;width:172.90px;height:6.30px;background:#dc4a66;"></div>
<div class="r" style="left:797.80px;top:578.00px;width:1.20px;height:6.30px;background:#ffffff;"></div>
<div class="r" style="left:878.00px;top:578.00px;width:1.20px;height:6.30px;background:#ffffff;"></div>
<div class="t" style="left:759.80px;top:587.84px;font-size:12px;line-height:12px;font-weight:400;color:#46494f;letter-spacing:-0.766px;">Overdue CC</div>
<div class="t" style="left:336.00px;width:600px;text-align:right;top:587.84px;font-size:12px;line-height:12px;font-weight:400;color:#46494f;letter-spacing:0.000px;">44</div>
<svg class="s" style="left:943.90px;top:586.30px;" width="13" height="13" viewBox="0 0 13 13"><circle cx="6.5" cy="6.5" r="6.5" fill="#dc4a66"/><rect x="5.50" y="2.70" width="2" height="5" rx="0.8" fill="#fff"/><circle cx="6.5" cy="9.50" r="1.05" fill="#fff"/></svg>
<div class="r" style="left:759.80px;top:616.40px;width:197.60px;height:6.30px;background:#213a78;"></div>
<div class="t" style="left:759.80px;top:626.24px;font-size:12px;line-height:12px;font-weight:400;color:#46494f;letter-spacing:-0.648px;">Overdue HE</div>
<div class="t" style="left:336.00px;width:600px;text-align:right;top:626.24px;font-size:12px;line-height:12px;font-weight:400;color:#46494f;letter-spacing:0.000px;">12</div>
<div class="r" style="left:759.80px;top:657.30px;width:197.60px;height:1.00px;background:#d7d9dd;"></div>
<div class="r" style="left:759.80px;top:654.80px;width:0.00px;height:6.30px;background:#213a78;"></div>
<div class="t" style="left:759.80px;top:664.64px;font-size:12px;line-height:12px;font-weight:400;color:#46494f;letter-spacing:-0.360px;">Held</div>
<div class="t" style="left:336.00px;width:600px;text-align:right;top:664.64px;font-size:12px;line-height:12px;font-weight:400;color:#46494f;letter-spacing:0.000px;">0</div>
<div class="r" style="left:759.80px;top:695.70px;width:197.60px;height:1.00px;background:#d7d9dd;"></div>
<div class="r" style="left:759.80px;top:693.20px;width:0.00px;height:6.30px;background:#213a78;"></div>
<div class="t" style="left:759.80px;top:703.04px;font-size:12px;line-height:12px;font-weight:400;color:#46494f;letter-spacing:-0.107px;">New 15 Min</div>
<div class="t" style="left:336.00px;width:600px;text-align:right;top:703.04px;font-size:12px;line-height:12px;font-weight:400;color:#46494f;letter-spacing:0.000px;">0</div>
<svg class="s" style="left:756.80px;top:749.50px;" width="14" height="9" viewBox="0 0 14 9"><rect x="0" y="0.4" width="13.3" height="1.9" fill="#45484e"/><rect x="0" y="3.1" width="10.3" height="1.9" fill="#45484e"/><rect x="0" y="5.8" width="7.8" height="1.9" fill="#45484e"/></svg>
<svg class="s" style="left:780.60px;top:747.40px;" width="16" height="11" viewBox="0 0 16 11"><path d="M0.5 5.5 L2.7 8.5 L4.9 2.4 L6.4 10.0 L8.8 0.9 L10.6 8.0 L12.0 3.6 L13.3 7.0 L14.7 5.5 L15.4 6.5" stroke="#b3b5b9" stroke-width="1.7" fill="none" stroke-linejoin="round"/></svg>
<div class="r" style="left:608.15px;top:434.25px;width:2.00px;height:2.00px;background:#85888c;"></div>
<div class="r" style="left:608.15px;top:438.15px;width:2.00px;height:2.00px;background:#85888c;"></div>
<div class="r" style="left:612.00px;top:434.25px;width:2.00px;height:2.00px;background:#85888c;"></div>
<div class="r" style="left:612.00px;top:438.15px;width:2.00px;height:2.00px;background:#85888c;"></div>
<div class="r" style="left:615.85px;top:434.25px;width:2.00px;height:2.00px;background:#85888c;"></div>
<div class="r" style="left:615.85px;top:438.15px;width:2.00px;height:2.00px;background:#85888c;"></div>
<div class="r" style="left:710.05px;top:432.65px;width:1.90px;height:1.90px;background:#8a8d92;border-radius:1px"></div>
<div class="r" style="left:710.05px;top:435.95px;width:1.90px;height:1.90px;background:#8a8d92;border-radius:1px"></div>
<div class="r" style="left:710.05px;top:439.25px;width:1.90px;height:1.90px;background:#8a8d92;border-radius:1px"></div>
<div class="r" style="left:514.20px;top:457.10px;width:197.60px;height:2.00px;background:#404349;"></div>
<div class="t" style="left:514.20px;top:463.71px;font-size:10.5px;line-height:10.5px;font-weight:700;color:#4a4d53;letter-spacing:-0.154px;">CT - EWM - Priority</div>
<div class="t" style="left:514.20px;top:496.96px;font-size:18px;line-height:18px;font-weight:400;color:#3e4147;letter-spacing:-0.691px;">PFS System</div>
<div class="r" style="left:514.20px;top:538.50px;width:198.00px;height:1.00px;background:#e3e5e8;"></div>
<div class="t" style="left:514.20px;top:552.84px;font-size:12px;line-height:12px;font-weight:400;color:#46494f;letter-spacing:-0.273px;">0-100</div>
<div class="t" style="left:90.60px;width:600px;text-align:right;top:552.84px;font-size:12px;line-height:12px;font-weight:400;color:#46494f;letter-spacing:0.000px;">0</div>
<svg class="s" style="left:697.90px;top:550.90px;" width="13" height="13" viewBox="0 0 13 13"><circle cx="6.5" cy="6.5" r="6.5" fill="#4cbf4e"/><path d="M3.40 7.10 L5.40 9.00 L9.50 4.90" stroke="#fff" stroke-width="1.5" fill="none" stroke-linecap="round" stroke-linejoin="round"/></svg>
<svg class="s" style="left:560.00px;top:534.00px;" width="100" height="60" viewBox="0 0 100 60"><path d="M22.60 35.00 L76.00 35.00" stroke="#74c072" stroke-width="1.15" fill="none" stroke-linejoin="round"/></svg>
<div class="r" style="left:514.20px;top:576.90px;width:198.00px;height:1.00px;background:#e3e5e8;"></div>
<div class="t" style="left:514.20px;top:591.24px;font-size:12px;line-height:12px;font-weight:400;color:#46494f;letter-spacing:-0.140px;">100-200</div>
<div class="t" style="left:90.60px;width:600px;text-align:right;top:591.24px;font-size:12px;line-height:12px;font-weight:400;color:#46494f;letter-spacing:0.000px;">0</div>
<svg class="s" style="left:697.90px;top:589.30px;" width="13" height="13" viewBox="0 0 13 13"><circle cx="6.5" cy="6.5" r="6.5" fill="#4cbf4e"/><path d="M3.40 7.10 L5.40 9.00 L9.50 4.90" stroke="#fff" stroke-width="1.5" fill="none" stroke-linecap="round" stroke-linejoin="round"/></svg>
<svg class="s" style="left:560.00px;top:572.40px;" width="100" height="60" viewBox="0 0 100 60"><path d="M21.20 24.50 L24.20 24.50 L25.80 35.30 L27.50 35.30 L30.70 12.40 L32.40 12.40 L34.30 18.60 L38.60 18.60 L43.80 29.40 L46.80 29.40 L48.40 35.30 L75.90 35.30" stroke="#74c072" stroke-width="1.15" fill="none" stroke-linejoin="round"/></svg>
<div class="r" style="left:514.20px;top:615.30px;width:198.00px;height:1.00px;background:#e3e5e8;"></div>
<div class="t" style="left:514.20px;top:629.64px;font-size:12px;line-height:12px;font-weight:400;color:#46494f;letter-spacing:0.010px;">200-300</div>
<div class="t" style="left:90.60px;width:600px;text-align:right;top:629.64px;font-size:12px;line-height:12px;font-weight:400;color:#46494f;letter-spacing:0.000px;">8</div>
<svg class="s" style="left:697.40px;top:628.20px;" width="14" height="13" viewBox="0 0 14 13"><path d="M7.0 0.6 L13.7 12.6 L0.3 12.6 Z" fill="#f0a52e" stroke="#f0a52e" stroke-width="0.8" stroke-linejoin="round"/><rect x="6.10" y="4.3" width="1.8" height="4.6" fill="#fff"/><rect x="6.10" y="9.8" width="1.8" height="1.7" fill="#fff"/></svg>
<svg class="s" style="left:560.00px;top:610.80px;" width="100" height="60" viewBox="0 0 100 60"><path d="M22.90 32.60 L26.50 34.90 L28.40 32.00 L30.40 28.70 L32.40 22.10 L36.00 20.20 L39.90 19.20 L42.50 17.60 L43.80 15.30 L47.10 15.60 L49.70 13.00 L53.70 14.00 L56.90 15.30 L59.60 17.60 L62.20 14.90 L65.50 18.50 L68.70 19.50 L72.30 17.60 L75.90 19.20" stroke="#f1b155" stroke-width="1.15" fill="none" stroke-linejoin="round"/></svg>
<div class="r" style="left:514.20px;top:653.70px;width:198.00px;height:1.00px;background:#e3e5e8;"></div>
<div class="t" style="left:514.20px;top:668.04px;font-size:12px;line-height:12px;font-weight:400;color:#46494f;letter-spacing:0.010px;">300-400</div>
<div class="t" style="left:90.60px;width:600px;text-align:right;top:668.04px;font-size:12px;line-height:12px;font-weight:400;color:#46494f;letter-spacing:0.000px;">0</div>
<svg class="s" style="left:697.90px;top:666.10px;" width="13" height="13" viewBox="0 0 13 13"><circle cx="6.5" cy="6.5" r="6.5" fill="#4cbf4e"/><path d="M3.40 7.10 L5.40 9.00 L9.50 4.90" stroke="#fff" stroke-width="1.5" fill="none" stroke-linecap="round" stroke-linejoin="round"/></svg>
<svg class="s" style="left:560.00px;top:649.20px;" width="100" height="60" viewBox="0 0 100 60"><path d="M22.90 35.40 L55.00 35.40 L57.60 12.90 L60.20 35.40 L63.20 12.90 L65.50 12.90 L67.40 35.40 L69.10 12.90 L70.00 35.40 L76.00 35.40" stroke="#74c072" stroke-width="1.15" fill="none" stroke-linejoin="round"/></svg>
<div class="r" style="left:514.20px;top:692.10px;width:198.00px;height:1.00px;background:#e3e5e8;"></div>
<div class="t" style="left:514.20px;top:706.44px;font-size:12px;line-height:12px;font-weight:400;color:#46494f;letter-spacing:0.010px;">400-500</div>
<div class="t" style="left:90.60px;width:600px;text-align:right;top:706.44px;font-size:12px;line-height:12px;font-weight:400;color:#46494f;letter-spacing:0.000px;">0</div>
<svg class="s" style="left:697.90px;top:704.50px;" width="13" height="13" viewBox="0 0 13 13"><circle cx="6.5" cy="6.5" r="6.5" fill="#4cbf4e"/><path d="M3.40 7.10 L5.40 9.00 L9.50 4.90" stroke="#fff" stroke-width="1.5" fill="none" stroke-linecap="round" stroke-linejoin="round"/></svg>
<svg class="s" style="left:560.00px;top:687.60px;" width="100" height="60" viewBox="0 0 100 60"><path d="M22.60 35.00 L76.00 35.00" stroke="#74c072" stroke-width="1.15" fill="none" stroke-linejoin="round"/></svg>
<svg class="s" style="left:511.60px;top:749.30px;" width="14" height="9" viewBox="0 0 14 9"><rect x="0" y="0.4" width="13.3" height="1.9" fill="#c8cace"/><rect x="0" y="3.1" width="10.3" height="1.9" fill="#c8cace"/><rect x="0" y="5.8" width="7.8" height="1.9" fill="#c8cace"/></svg>
<svg class="s" style="left:535.20px;top:747.30px;" width="16" height="11" viewBox="0 0 16 11"><path d="M0.5 5.5 L2.7 8.5 L4.9 2.4 L6.4 10.0 L8.8 0.9 L10.6 8.0 L12.0 3.6 L13.3 7.0 L14.7 5.5 L15.4 6.5" stroke="#3b3e44" stroke-width="1.8" fill="none" stroke-linejoin="round"/></svg>
<div class="t" style="left:629.50px;top:747.59px;font-size:11px;line-height:11px;font-weight:700;color:#c4c6ca;letter-spacing:-0.340px;">Day</div>
<div class="t" style="left:661.30px;top:747.59px;font-size:11px;line-height:11px;font-weight:700;color:#3e4147;letter-spacing:0.692px;">60m</div>
<div class="t" style="left:695.70px;top:747.59px;font-size:11px;line-height:11px;font-weight:700;color:#c4c6ca;letter-spacing:0.342px;">15m</div>
<div class="r" style="left:1099.35px;top:434.25px;width:2.00px;height:2.00px;background:#85888c;"></div>
<div class="r" style="left:1099.35px;top:438.15px;width:2.00px;height:2.00px;background:#85888c;"></div>
<div class="r" style="left:1103.20px;top:434.25px;width:2.00px;height:2.00px;background:#85888c;"></div>
<div class="r" style="left:1103.20px;top:438.15px;width:2.00px;height:2.00px;background:#85888c;"></div>
<div class="r" style="left:1107.05px;top:434.25px;width:2.00px;height:2.00px;background:#85888c;"></div>
<div class="r" style="left:1107.05px;top:438.15px;width:2.00px;height:2.00px;background:#85888c;"></div>
<div class="r" style="left:1201.25px;top:432.65px;width:1.90px;height:1.90px;background:#8a8d92;border-radius:1px"></div>
<div class="r" style="left:1201.25px;top:435.95px;width:1.90px;height:1.90px;background:#8a8d92;border-radius:1px"></div>
<div class="r" style="left:1201.25px;top:439.25px;width:1.90px;height:1.90px;background:#8a8d92;border-radius:1px"></div>
<div class="r" style="left:1005.40px;top:457.10px;width:197.60px;height:2.00px;background:#404349;"></div>
<div class="t" style="left:1005.50px;top:463.51px;font-size:10.5px;line-height:10.5px;font-weight:700;color:#4a4d53;letter-spacing:-0.080px;">CT - EWM - New Tasks</div>
<div class="t" style="left:1005.50px;top:493.16px;font-size:18px;line-height:18px;font-weight:400;color:#3e4147;letter-spacing:-0.691px;">PFS System</div>
<div class="r" style="left:1005.50px;top:534.60px;width:197.50px;height:1.00px;background:#d7d9dd;"></div>
<div class="t" style="left:1005.50px;top:541.44px;font-size:12px;line-height:12px;font-weight:400;color:#46494f;letter-spacing:-0.062px;">New 30 Min</div>
<div class="t" style="left:581.30px;width:600px;text-align:right;top:541.44px;font-size:12px;line-height:12px;font-weight:400;color:#46494f;letter-spacing:0.000px;">0</div>
<div class="r" style="left:1092.55px;top:574.55px;width:4.90px;height:4.90px;background:#cbcdd1;border-radius:50%"></div>
<div class="r" style="left:1102.15px;top:574.55px;width:4.90px;height:4.90px;background:#1f2124;border-radius:50%"></div>
<div class="r" style="left:1111.75px;top:574.55px;width:4.90px;height:4.90px;background:#cbcdd1;border-radius:50%"></div>
<div class="r" style="left:1099.35px;top:625.65px;width:2.00px;height:2.00px;background:#85888c;"></div>
<div class="r" style="left:1099.35px;top:629.55px;width:2.00px;height:2.00px;background:#85888c;"></div>
<div class="r" style="left:1103.20px;top:625.65px;width:2.00px;height:2.00px;background:#85888c;"></div>
<div class="r" style="left:1103.20px;top:629.55px;width:2.00px;height:2.00px;background:#85888c;"></div>
<div class="r" style="left:1107.05px;top:625.65px;width:2.00px;height:2.00px;background:#85888c;"></div>
<div class="r" style="left:1107.05px;top:629.55px;width:2.00px;height:2.00px;background:#85888c;"></div>
<div class="r" style="left:1201.25px;top:624.05px;width:1.90px;height:1.90px;background:#8a8d92;border-radius:1px"></div>
<div class="r" style="left:1201.25px;top:627.35px;width:1.90px;height:1.90px;background:#8a8d92;border-radius:1px"></div>
<div class="r" style="left:1201.25px;top:630.65px;width:1.90px;height:1.90px;background:#8a8d92;border-radius:1px"></div>
<div class="r" style="left:1005.40px;top:648.50px;width:197.60px;height:2.00px;background:#404349;"></div>
<div class="t" style="left:1005.50px;top:655.51px;font-size:10.5px;line-height:10.5px;font-weight:700;color:#4a4d53;letter-spacing:-0.167px;">CT - EWM - Completed Tasks</div>
<div class="t" style="left:1005.50px;top:684.96px;font-size:18px;line-height:18px;font-weight:400;color:#3e4147;letter-spacing:-0.691px;">PFS System</div>
<div class="r" style="left:1005.50px;top:726.50px;width:197.50px;height:1.00px;background:#d7d9dd;"></div>
<div class="t" style="left:1005.50px;top:732.94px;font-size:12px;line-height:12px;font-weight:400;color:#46494f;letter-spacing:-0.146px;">Completed 30 Min</div>
<div class="t" style="left:581.30px;width:600px;text-align:right;top:732.94px;font-size:12px;line-height:12px;font-weight:400;color:#46494f;letter-spacing:0.000px;">0</div>
</body></html>
